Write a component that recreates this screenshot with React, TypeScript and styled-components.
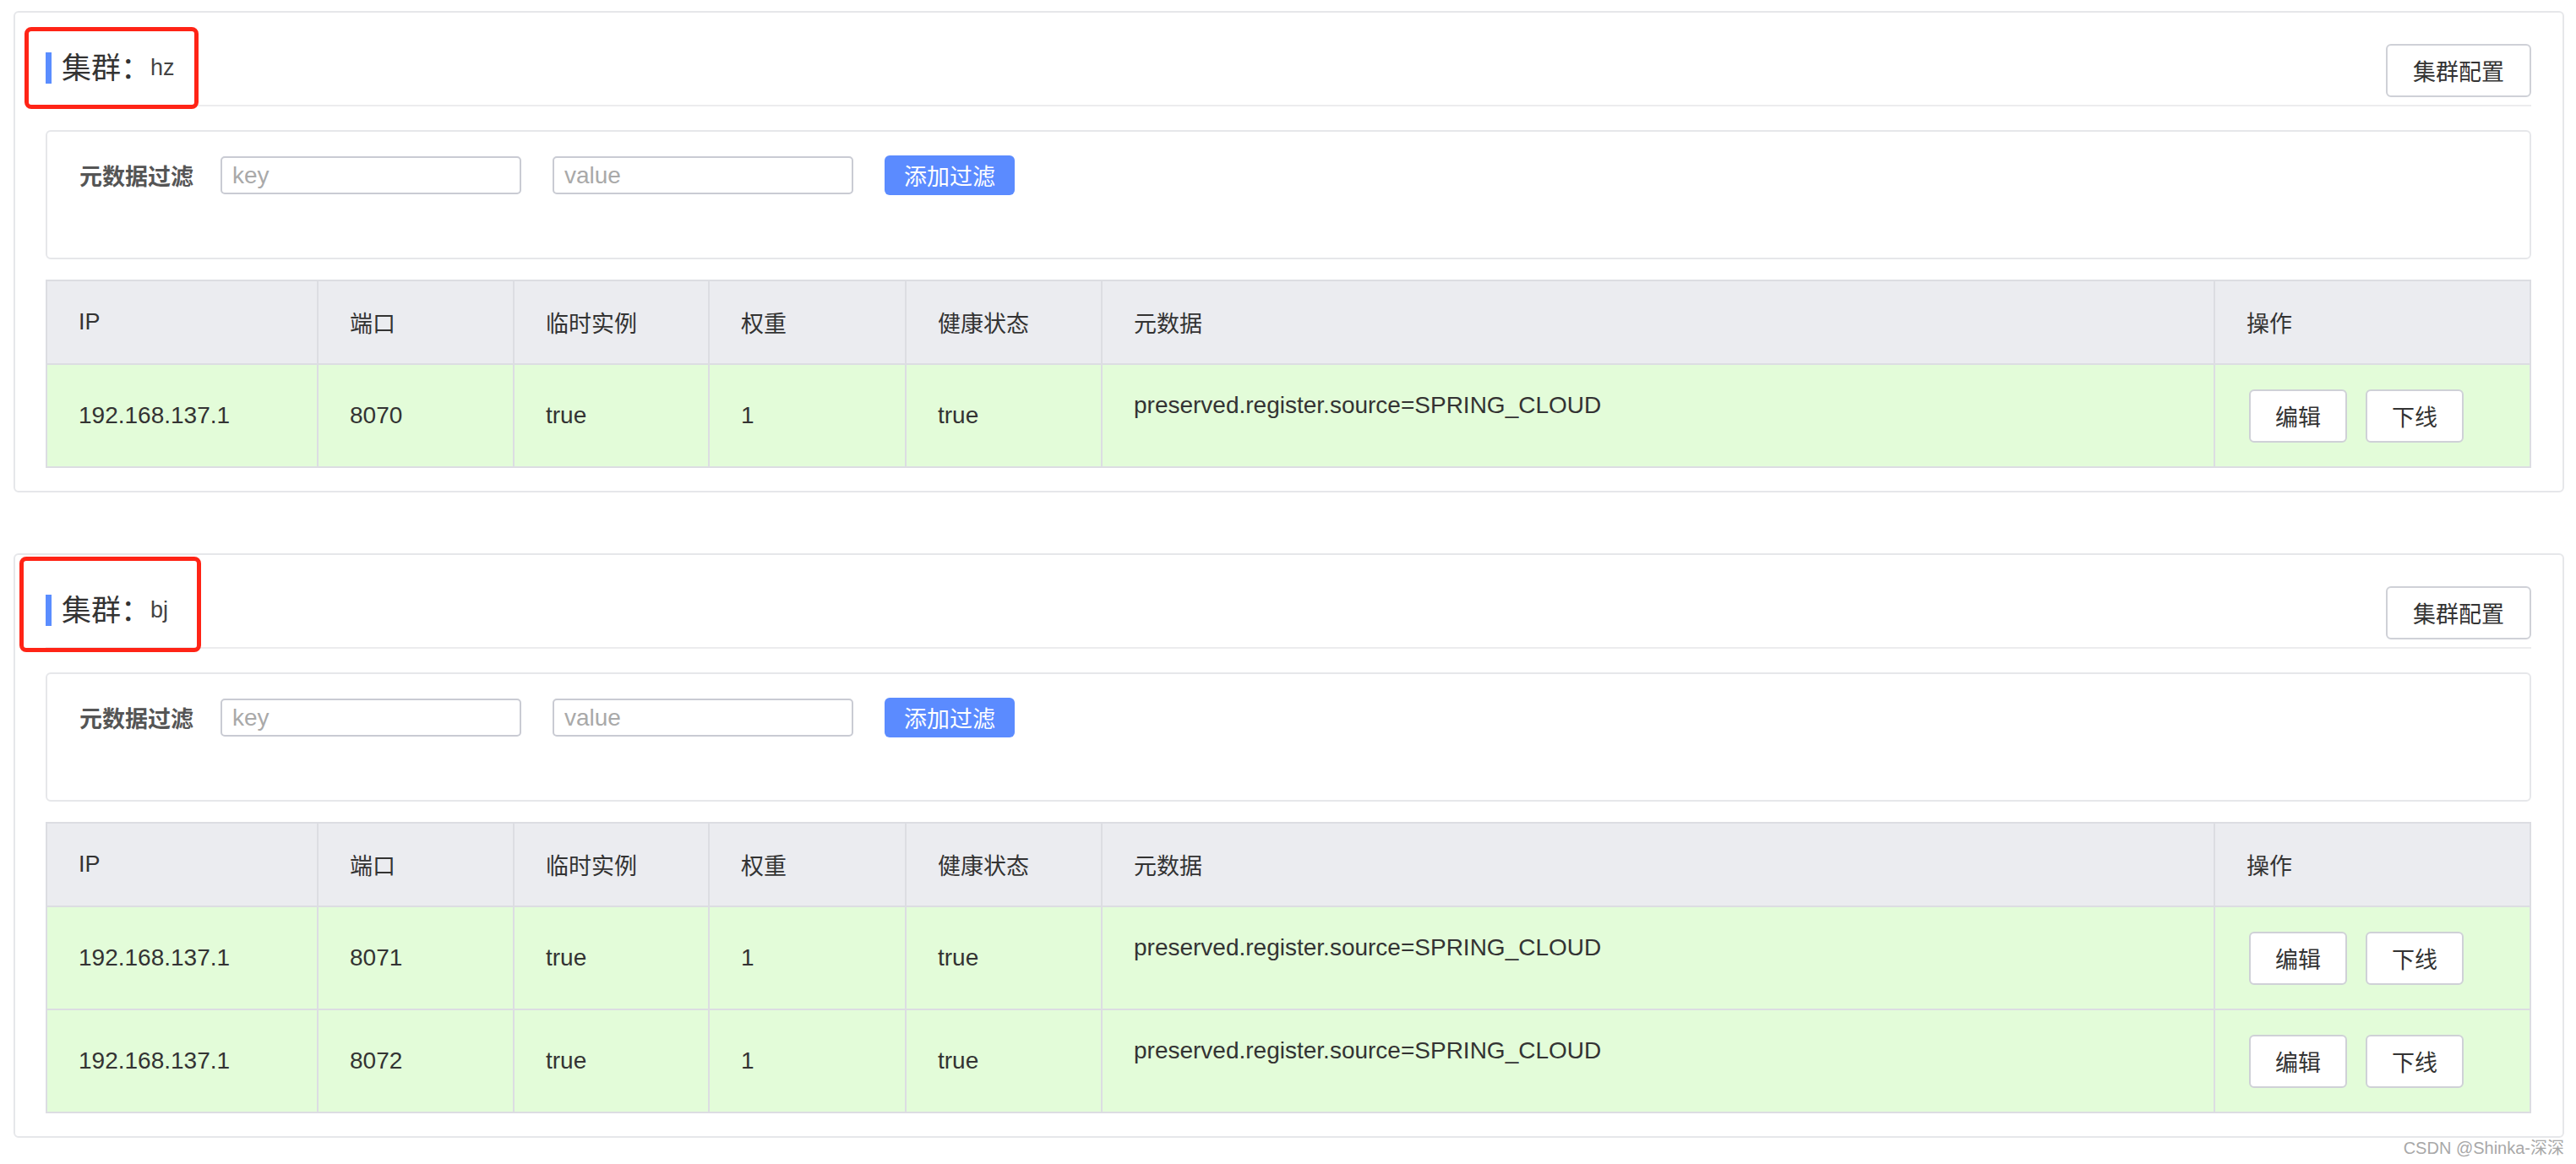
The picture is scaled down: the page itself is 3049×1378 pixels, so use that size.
import styled, { createGlobalStyle } from 'styled-components'

const GlobalStyle = createGlobalStyle`
  body {
    margin: 0;
    background: #fff;
    font-family: 'Liberation Sans', 'Noto Sans CJK SC', sans-serif;
    color: #333;
  }
  * {
    box-sizing: border-box;
  }
`

const Page = styled.div`
  padding: 13px 14px 0 16px;
`

const Panel = styled.section`
  border: 2px solid #e6e7ea;
  border-radius: 6px;
  padding: 0 37px 27px 36px;
  background: #fff;

  & + & {
    margin-top: 72px;
  }
`

const PanelHeader = styled.div`
  display: flex;
  align-items: center;
  justify-content: space-between;
  padding: 37px 0 9px;
  border-bottom: 2px solid #ececee;
`

const Title = styled.h3`
  position: relative;
  display: flex;
  align-items: center;
  margin: 0 0 7px;
  font-size: 35px;
  font-weight: 400;
  line-height: 1;
  color: #333;

  &::before {
    content: '';
    width: 7px;
    height: 37px;
    margin-right: 12px;
    background: #5a8dff;
  }

  small {
    font-size: 27px;
    color: #444;
  }
`

// red annotation drawn over the screenshot
const Mark = styled.span<{ $t: number; $r: number; $b: number; $l: number }>`
  position: absolute;
  top: ${({ $t }) => -$t}px;
  right: ${({ $r }) => -$r}px;
  bottom: ${({ $b }) => -$b}px;
  left: ${({ $l }) => -$l}px;
  border: 5px solid #ff2416;
  border-radius: 8px;
  z-index: 1;
  pointer-events: none;
`

const Button = styled.button<{ $primary?: boolean }>`
  height: ${({ $primary }) => ($primary ? '47px' : '63px')};
  padding: 0 30px;
  border: ${({ $primary }) => ($primary ? 'none' : '2px solid #cfd1d7')};
  border-radius: 6px;
  background: ${({ $primary }) => ($primary ? '#5b8bff' : '#fff')};
  color: ${({ $primary }) => ($primary ? '#fff' : '#333')};
  font-family: inherit;
  font-size: 27px;
  cursor: pointer;
`

const FilterBox = styled.div`
  display: flex;
  align-items: center;
  margin-top: 28px;
  padding: 28px 38px 74px;
  border: 2px solid #e6e7ea;
  border-radius: 6px;

  label {
    margin-right: 32px;
    font-size: 27px;
    font-weight: 700;
    color: #555;
  }
`

const Input = styled.input`
  width: 356px;
  height: 45px;
  margin-right: 37px;
  padding: 0 12px;
  border: 2px solid #c9cbd3;
  border-radius: 5px;
  font-family: inherit;
  font-size: 28px;
  color: #333;

  &::placeholder {
    color: #a9a9a9;
  }
`

const AddButton = styled(Button)`
  width: 154px;
  padding: 0;
`

const Table = styled.table`
  width: 100%;
  margin-top: 24px;
  border-collapse: collapse;
  table-layout: fixed;

  th,
  td {
    padding: 0 37px;
    border: 2px solid #dcdde2;
    text-align: left;
  }

  th {
    height: 99px;
    background: #ebecf0;
    font-size: 27px;
    font-weight: 400;
    color: #333;
  }

  td {
    height: 122px;
    background: #e3fcd9;
    font-size: 28px;
    line-height: 1.5;
    color: #333;
  }
`

const MetaCell = styled.td`
  && {
    vertical-align: top;
    padding-top: 27px;
  }
`

const OpsCell = styled.td`
  && {
    padding-left: 40px;
  }

  div {
    display: flex;
    gap: 22px;
  }

  button {
    width: 116px;
    padding: 0;
  }
`

const Watermark = styled.div`
  text-align: right;
  font-size: 20px;
  line-height: 24px;
  color: #a8a8a8;
`

type Instance = { ip: string; port: number; ephemeral: boolean; weight: number; healthy: boolean; meta: string }

type Cluster = {
  name: string
  mark: [number, number, number, number]
  instances: Instance[]
}

const meta = 'preserved.register.source=SPRING_CLOUD'

const clusters: Cluster[] = [
  {
    name: 'hz',
    mark: [30, 28, 30, 25],
    instances: [{ ip: '192.168.137.1', port: 8070, ephemeral: true, weight: 1, healthy: true, meta }],
  },
  {
    name: 'bj',
    mark: [45, 39, 31, 31],
    instances: [
      { ip: '192.168.137.1', port: 8071, ephemeral: true, weight: 1, healthy: true, meta },
      { ip: '192.168.137.1', port: 8072, ephemeral: true, weight: 1, healthy: true, meta },
    ],
  },
]

const columns = [
  { title: 'IP', width: 321 },
  { title: '端口', width: 232 },
  { title: '临时实例', width: 231 },
  { title: '权重', width: 233 },
  { title: '健康状态', width: 232 },
  { title: '元数据' },
  { title: '操作', width: 374 },
]

const ClusterPanel = ({ cluster }: { cluster: Cluster }) => {
  const [t, r, b, l] = cluster.mark
  return (
    <Panel>
      <PanelHeader>
        <Title>
          集群：<small>{cluster.name}</small>
          <Mark $t={t} $r={r} $b={b} $l={l} />
        </Title>
        <Button>集群配置</Button>
      </PanelHeader>

      <FilterBox>
        <label>元数据过滤</label>
        <Input placeholder="key" />
        <Input placeholder="value" />
        <AddButton $primary>添加过滤</AddButton>
      </FilterBox>

      <Table>
        <colgroup>
          {columns.map((col) => (
            <col key={col.title} width={col.width} />
          ))}
        </colgroup>
        <thead>
          <tr>
            {columns.map((col) => (
              <th key={col.title}>{col.title}</th>
            ))}
          </tr>
        </thead>
        <tbody>
          {cluster.instances.map((ins) => (
            <tr key={ins.port}>
              <td>{ins.ip}</td>
              <td>{ins.port}</td>
              <td>{String(ins.ephemeral)}</td>
              <td>{ins.weight}</td>
              <td>{String(ins.healthy)}</td>
              <MetaCell>{ins.meta}</MetaCell>
              <OpsCell>
                <div>
                  <Button>编辑</Button>
                  <Button>下线</Button>
                </div>
              </OpsCell>
            </tr>
          ))}
        </tbody>
      </Table>
    </Panel>
  )
}

const App = () => (
  <>
    <GlobalStyle />
    <Page>
      {clusters.map((cluster) => (
        <ClusterPanel cluster={cluster} key={cluster.name} />
      ))}
      <Watermark>CSDN @Shinka-深深</Watermark>
    </Page>
  </>
)

export default App
